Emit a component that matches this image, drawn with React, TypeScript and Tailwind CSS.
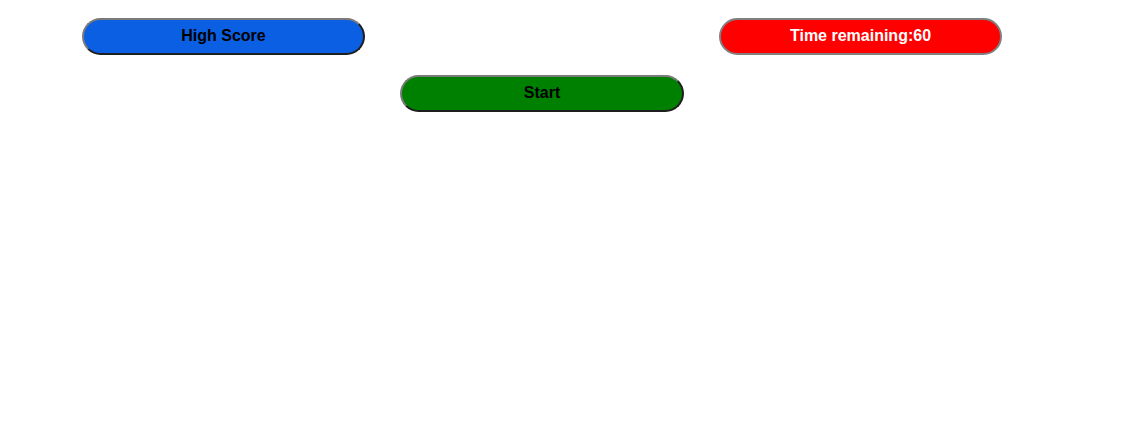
import React, { useState } from 'react'

const App = () => {
  const [time] = useState(60)

  return (
    <div className="min-h-[447px] w-full bg-white pt-[18px] pl-[82px] font-['Liberation_Sans',Arial,sans-serif]">
      {/* top row */}
      <div className="flex gap-[354px]">
        <button className="h-[37px] w-[283px] rounded-full border-2 border-solid border-t-[#7a7a7a] border-l-[#7a7a7a] border-r-[#1e1e1e] border-b-[#1e1e1e] bg-[#0a5fe3] pb-[2px] text-base font-bold text-black">
          High Score
        </button>
        <button className="h-[37px] w-[283px] rounded-full border-2 border-solid border-[#808080] bg-[#ff0000] pb-[2px] text-base font-bold text-white">
          Time remaining:{time}
        </button>
      </div>

      {/* start */}
      <div className="mt-5 flex pl-[318px]">
        <button className="h-[37px] w-[284px] rounded-full border-2 border-solid border-t-[#7a7a7a] border-l-[#7a7a7a] border-r-[#1e1e1e] border-b-[#1e1e1e] bg-[#008000] pb-[2px] text-base font-bold text-black">
          Start
        </button>
      </div>
    </div>
  )
}

export default App
